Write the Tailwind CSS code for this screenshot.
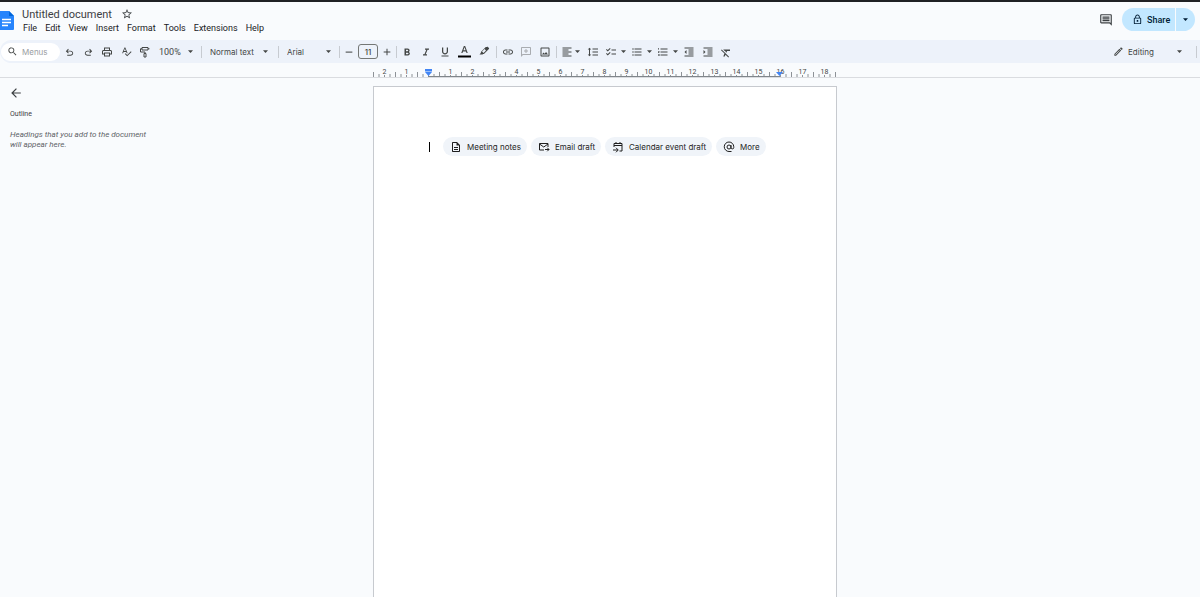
<!DOCTYPE html>
<html lang="en">
<head>
<meta charset="utf-8">
<meta name="viewport" content="width=device-width, initial-scale=1">
<title>Untitled document</title>
<script src="https://cdn.jsdelivr.net/npm/@tailwindcss/browser@4"></script>
</head>
<body class="flex min-h-screen flex-col overflow-hidden bg-[#f9fbfd] font-['Roboto',sans-serif] text-[9px] leading-3 text-[#3c4043]">
<svg class="hidden" aria-hidden="true">
  <symbol id="down" viewBox="0 0 10 10"><path d="M0 2.500h10L5 8z" fill="currentColor"/></symbol>
</svg>

<header class="flex h-10 items-start border-t-2 border-[#202124] pr-[5px]">
  <svg class="mt-2 h-5 w-[14px] shrink-0" viewBox="0 0 14 20" aria-label="Docs"><path d="M0 1h9l5 5v13a1 1 0 0 1-1 1H0z" fill="#2684fc"/><path d="M9 1v5h5z" fill="#0066da"/><path d="M2 9.500h9M2 12.500h9M2 15.500h6" stroke="#fff" stroke-width="1.400"/></svg>
  <div class="ml-2 mt-1.5 flex flex-col">
    <div class="flex h-3 items-center">
      <input aria-label="Document title" value="Untitled document" class="h-4 w-[99px] bg-transparent text-[11px] text-[#3c4043] outline-none">
      <button aria-label="Star"><svg class="size-3" viewBox="0 0 24 24" fill="currentColor"><path d="M22 9.240l-7.190-.62L12 2 9.190 8.630 2 9.240l5.460 4.730L5.820 21 12 17.270 18.180 21l-1.630-7.030L22 9.240zM12 15.400l-3.760 2.270 1-4.280-3.320-2.880 4.380-.38L12 6.100l1.710 4.040 4.380.38-3.320 2.880 1 4.280L12 15.400z"/></svg></button>
    </div>
    <nav class="mt-0.5 flex gap-2 pl-px text-[#202124]">
      <button>File</button><button>Edit</button><button>View</button><button>Insert</button><button>Format</button><button>Tools</button><button>Extensions</button><button>Help</button>
    </nav>
  </div>
  <div class="ml-auto mt-1.5 flex items-center gap-[9px]">
    <button aria-label="Comments"><svg class="size-[14px]" viewBox="0 0 24 24" fill="currentColor"><path d="M21.990 4c0-1.100-.89-2-1.990-2H4c-1.100 0-2 .9-2 2v12c0 1.100.9 2 2 2h14l4 4-.01-18zM20 4v13.170L18.830 16H4V4h16v13.200zM6 12h12v2H6zm0-3h12v2H6zm0-3h12v2H6z"/></svg></button>
    <div class="flex h-[23px] text-[#001d35]">
      <button class="flex w-[53px] items-center gap-1 rounded-l-full bg-[#c2e7ff] pl-2.5 font-medium"><svg class="size-[11px] shrink-0" viewBox="0 0 24 24" fill="currentColor"><path d="M18 8h-1V6c0-2.760-2.240-5-5-5S7 3.240 7 6v2H6c-1.100 0-2 .9-2 2v10c0 1.100.9 2 2 2h12c1.100 0 2-.9 2-2V10c0-1.100-.9-2-2-2zM9 6c0-1.660 1.340-3 3-3s3 1.340 3 3v2H9V6zm9 14H6V10h12v10zm-6-3c1.100 0 2-.9 2-2s-.9-2-2-2-2 .9-2 2 .9 2 2 2z"/></svg>Share</button>
      <button aria-label="Share options" class="ml-px flex w-[19px] items-center justify-center rounded-r-full bg-[#c2e7ff]"><svg class="size-[5px]"><use href="#down"/></svg></button>
    </div>
  </div>
</header>

<div role="toolbar" aria-label="Main toolbar" class="flex h-[23px] shrink-0 items-center rounded-l-full bg-[#edf2fa] pr-[3px] text-[#444746] [&_button]:flex [&_button]:h-4 [&_button]:shrink-0 [&_button]:items-center [&_button]:justify-center [&_svg]:fill-current [&_hr]:h-3 [&_hr]:w-px [&_hr]:shrink-0 [&_hr]:border-0 [&_hr]:bg-[#c7cbd1]">
  <label class="ml-px flex h-[18px] w-[59px] shrink-0 items-center gap-1 rounded-full bg-white pl-1.5"><svg class="size-[11px] shrink-0" viewBox="0 0 24 24"><path d="M15.500 14h-.79l-.28-.27A6.471 6.471 0 0 0 16 9.500 6.500 6.500 0 1 0 9.500 16c1.610 0 3.090-.59 4.230-1.570l.27.28v.79l5 4.990L20.490 19l-4.990-5zm-6 0C7.010 14 5 11.990 5 9.500S7.010 5 9.500 5 14 7.010 14 9.500 11.990 14 9.500 14z"/></svg><input aria-label="Search the menus" placeholder="Menus" class="w-9 bg-transparent font-['Inter',sans-serif] text-[8px] outline-none placeholder:text-[#9a9da1]"></label>
  <button class="w-[19px]" aria-label="Undo"><svg class="mt-0.5 size-[11px]" viewBox="0 0 24 24"><path d="M7 19v-2h7.100q1.575 0 2.737-1T18 13.500 16.837 11 14.100 10H7.800l2.600 2.600L9 14 4 9l5-5 1.400 1.400L7.800 8h6.300q2.425 0 4.163 1.575T20 13.500t-1.737 3.925T14.100 19z"/></svg></button>
  <button class="w-[18px]" aria-label="Redo"><svg class="mt-0.5 size-[11px] -scale-x-100" viewBox="0 0 24 24"><path d="M7 19v-2h7.100q1.575 0 2.737-1T18 13.500 16.837 11 14.100 10H7.800l2.600 2.600L9 14 4 9l5-5 1.400 1.400L7.800 8h6.300q2.425 0 4.163 1.575T20 13.500t-1.737 3.925T14.100 19z"/></svg></button>
  <button class="w-5" aria-label="Print"><svg class="size-3" viewBox="0 0 24 24"><path d="M19 8h-1V3H6v5H5c-1.660 0-3 1.340-3 3v6h4v4h12v-4h4v-6c0-1.660-1.340-3-3-3zM8 5h8v3H8V5zm8 14H8v-4h8v4zm2-4v-2H6v2H4v-4c0-.55.45-1 1-1h14c.55 0 1 .45 1 1v4h-2z"/></svg></button>
  <button class="w-[18px]" aria-label="Spelling"><svg class="size-[11px]" viewBox="0 0 24 24"><path d="M12.450 16h2.090L9.430 3H7.570L2.460 16h2.090l1.120-3h5.640l1.140 3zm-6.020-5L8.500 5.480 10.570 11H6.430zm15.160.59l-8.090 8.090L9.830 16l-1.410 1.410 5.090 5.090L23 13l-1.410-1.410z"/></svg></button>
  <button class="w-5" aria-label="Paint format"><svg class="size-3" viewBox="0 0 24 24" style="fill:none" stroke="currentColor" stroke-width="2"><path d="M6 3h12v5H6zM18 5.500h3M6 5.500H3V12h9v3M10 15h4v7h-4z"/></svg></button>
  <label class="grid w-[46px] shrink-0 items-center"><select aria-label="Zoom" class="col-start-1 row-start-1 w-full appearance-none pl-1 outline-none"><option>100%</option></select><svg class="pointer-events-none col-start-1 row-start-1 mr-2 size-[5px] justify-self-end"><use href="#down"/></svg></label>
  <hr>
  <label class="grid w-[76px] shrink-0 items-center"><select aria-label="Styles" class="col-start-1 row-start-1 w-full appearance-none pl-2 font-['Inter',sans-serif] text-[8px] outline-none"><option>Normal text</option></select><svg class="pointer-events-none col-start-1 row-start-1 mr-2.5 size-[5px] justify-self-end"><use href="#down"/></svg></label>
  <hr>
  <label class="grid w-[60px] shrink-0 items-center"><select aria-label="Font" class="col-start-1 row-start-1 w-full appearance-none pl-2 font-['Inter',sans-serif] text-[8px] outline-none"><option>Arial</option></select><svg class="pointer-events-none col-start-1 row-start-1 mr-2 size-[5px] justify-self-end"><use href="#down"/></svg></label>
  <hr>
  <button class="w-[18px]" aria-label="Decrease font size"><svg class="size-[10px]" viewBox="0 0 24 24"><path d="M4 11h16v2.500H4z"/></svg></button>
  <input aria-label="Font size" value="11" class="h-[15px] w-5 shrink-0 rounded-[3px] border border-[#747775] text-center font-['Inter',sans-serif] text-[8px] font-medium outline-none">
  <button class="w-[18px]" aria-label="Increase font size"><svg class="size-[10px]" viewBox="0 0 24 24"><path d="M20 13.200h-6.800V20h-2.400v-6.800H4v-2.400h6.800V4h2.400v6.800H20z"/></svg></button>
  <hr>
  <button class="w-5" aria-label="Bold"><svg class="size-3" viewBox="0 0 24 24"><path d="M15.600 11.790c.97-.67 1.650-1.770 1.650-2.790 0-2.260-1.750-4-4-4H7v14h7.040c2.090 0 3.710-1.700 3.710-3.790 0-1.520-.86-2.820-2.150-3.420zM10 7.500h3c.83 0 1.500.67 1.500 1.500s-.67 1.500-1.500 1.500h-3v-3zm3.500 9H10v-3h3.500c.83 0 1.500.67 1.500 1.500s-.67 1.500-1.500 1.500z"/></svg></button>
  <button class="w-[18px]" aria-label="Italic"><svg class="size-3" viewBox="0 0 24 24"><path d="M10 5v2.500h2.600L8.900 16.500H6V19h8v-2.500h-2.600L15.100 7.500H18V5z"/></svg></button>
  <button class="w-5" aria-label="Underline"><svg class="size-3" viewBox="0 0 24 24"><path d="M12 17c3.310 0 6-2.690 6-6V3h-2.500v8c0 1.930-1.570 3.500-3.500 3.500S8.500 12.930 8.500 11V3H6v8c0 3.310 2.690 6 6 6zm-7 2v2h14v-2H5z"/></svg></button>
  <button class="w-[19px]" aria-label="Text color"><svg class="size-[13px]" viewBox="0 0 26 26"><path d="M0 21h26v4H0z" fill="#000"/><path d="M11.700 2L6.500 16H9l1.100-3.200h5.800L17 16h2.500L14.300 2zm-.8 8.700L13 4.700l2.100 6z"/></svg></button>
  <button class="w-5" aria-label="Highlight color"><svg class="size-3" viewBox="0 0 24 24"><path d="M15.500 2.200 6.200 11.500c-.6.600-.7 1.500-.2 2.200L3 17h6l1.200-1.200c.7.400 1.500.3 2.100-.3L21.800 6c.6-.6.600-1.500 0-2.100l-1.900-1.800c-.6-.6-1.600-.6-2.200 0zM11 13.800 8.100 11l5-5L16 8.900z"/></svg></button>
  <hr class="ml-0.5">
  <button class="w-[21px]" aria-label="Insert link"><svg class="size-3" viewBox="0 0 24 24"><path d="M3.900 12c0-1.710 1.390-3.100 3.100-3.100h4V7H7c-2.760 0-5 2.240-5 5s2.240 5 5 5h4v-1.900H7c-1.710 0-3.100-1.390-3.100-3.100zM8 13h8v-2H8v2zm9-6h-4v1.900h4c1.710 0 3.100 1.390 3.100 3.100s-1.390 3.100-3.100 3.100h-4V17h4c2.760 0 5-2.240 5-5s-2.240-5-5-5z"/></svg></button>
  <button class="w-4 text-[#a9acb0]" aria-label="Add comment"><svg class="size-3 -scale-x-100" viewBox="0 0 24 24"><path d="M22 4c0-1.100-.9-2-2-2H4c-1.100 0-2 .9-2 2v12c0 1.100.9 2 2 2h14l4 4V4zm-2 13.200L18.800 16H4V4h16v13.200zM13 14h-2v-3H8V9h3V6h2v3h3v2h-3z"/></svg></button>
  <button class="w-[22px]" aria-label="Insert image"><svg class="size-3" viewBox="0 0 24 24"><path d="M19 5v14H5V5h14m0-2H5c-1.100 0-2 .9-2 2v14c0 1.100.9 2 2 2h14c1.100 0 2-.9 2-2V5c0-1.100-.9-2-2-2zm-4.860 8.860l-3 3.870L9 13.140 6 17h12l-3.860-5.140z"/></svg></button>
  <hr>
  <button class="w-[27px] gap-0.5" aria-label="Align"><svg class="size-3 shrink-0" viewBox="0 0 24 24"><path d="M15 15H3v2h12v-2zm0-8H3v2h12V7zM3 13h18v-2H3v2zm0 8h18v-2H3v2zM3 3v2h18V3H3z"/></svg><svg class="size-[5px] shrink-0"><use href="#down"/></svg></button>
  <button class="w-[18px]" aria-label="Line spacing"><svg class="size-3" viewBox="0 0 24 24"><path d="M6 7h2.500L5 3.500 1.500 7H4v10H1.500L5 20.500 8.500 17H6V7zm5-2v2h11V5H11zm0 14h11v-2H11v2zm0-6h11v-2H11v2z"/></svg></button>
  <button class="w-[27px] gap-1" aria-label="Checklist"><svg class="size-3 shrink-0" viewBox="0 0 24 24"><path d="M22 7h-9v2h9V7zm0 8h-9v2h9v-2zM5.540 11L2 7.460l1.410-1.410 2.120 2.120 4.240-4.240 1.410 1.410L5.540 11zm0 8L2 15.460l1.410-1.410 2.120 2.120 4.240-4.240 1.410 1.410L5.540 19z"/></svg><svg class="size-[5px] shrink-0"><use href="#down"/></svg></button>
  <button class="w-[25px] gap-1" aria-label="Bulleted list"><svg class="size-3 shrink-0" viewBox="0 0 24 24"><path d="M4 10.500c-.83 0-1.500.67-1.500 1.500s.67 1.500 1.500 1.500 1.500-.67 1.500-1.500-.67-1.500-1.500-1.500zm0-6c-.83 0-1.500.67-1.500 1.500S3.170 7.500 4 7.500 5.500 6.830 5.500 6 4.830 4.500 4 4.500zm0 12c-.83 0-1.500.68-1.500 1.500s.68 1.500 1.500 1.500 1.500-.68 1.500-1.500-.67-1.500-1.500-1.500zM7 19h14v-2H7v2zm0-6h14v-2H7v2zm0-8v2h14V5H7z"/></svg><svg class="size-[5px] shrink-0"><use href="#down"/></svg></button>
  <button class="w-[27px] gap-1" aria-label="Numbered list"><svg class="size-3 shrink-0" viewBox="0 0 24 24"><path d="M2 17h2v.5H3v1h1v.5H2v1h3v-4H2v1zm1-9h1V4H2v1h1v3zm-1 3h1.800L2 13.100v.9h3v-1H3.200L5 10.900V10H2v1zm5-6v2h14V5H7zm0 14h14v-2H7v2zm0-6h14v-2H7v2z"/></svg><svg class="size-[5px] shrink-0"><use href="#down"/></svg></button>
  <button class="w-4" aria-label="Decrease indent"><svg class="size-3" viewBox="0 0 24 24"><path d="M11 17h10v-2H11v2zm-8-5l4 4V8l-4 4zm0 9h18v-2H3v2zM3 3v2h18V3H3zm8 6h10V7H11v2zm0 4h10v-2H11v2z"/></svg></button>
  <button class="w-[21px]" aria-label="Increase indent"><svg class="size-3" viewBox="0 0 24 24"><path d="M3 21h18v-2H3v2zM3 8v8l4-4-4-4zm8 9h10v-2H11v2zM3 3v2h18V3H3zm8 6h10V7H11v2zm0 4h10v-2H11v2z"/></svg></button>
  <button class="w-4" aria-label="Clear formatting"><svg class="mt-0.5 size-3" viewBox="0 0 24 24"><path d="M20 8V5H6.390l3 3h1.830l-.55 1.280 2.090 2.100L14.210 8zM3.410 4.860L2 6.270l6.970 6.970L6.500 19h3l1.570-3.660L16.730 21l1.410-1.410z"/></svg></button>
  <label class="ml-auto flex shrink-0 items-center gap-1"><svg class="size-[11px]" viewBox="0 0 24 24"><path d="M14.060 9.020l.92.92L5.920 19H5v-.92l9.060-9.060M17.660 3c-.25 0-.51.1-.7.290l-1.830 1.830 3.750 3.750 1.830-1.830a.996.996 0 0 0 0-1.410l-2.340-2.340c-.2-.2-.45-.29-.71-.29zm-3.600 3.190L3 17.250V21h3.750L17.810 9.940l-3.750-3.750z"/></svg>
    <span class="grid w-[68px] items-center"><select aria-label="Editing mode" class="col-start-1 row-start-1 w-full appearance-none font-['Inter',sans-serif] text-[8px] outline-none"><option>Editing</option></select><svg class="pointer-events-none col-start-1 row-start-1 mr-[14px] size-[5px] justify-self-end"><use href="#down"/></svg></span></label>
  <hr>
</div>

<div class="flex h-[15px] shrink-0 justify-center border-b border-[#dadce0] pl-[9px]">
  <svg id="ruler" class="h-[15px] w-[465px] overflow-visible" viewBox="372 63 465 15" role="img" aria-label="Ruler"></svg>
</div>

<div class="grid grow grid-cols-[1fr_464px_1fr]">
  <aside class="pl-[10px] pt-[9px]">
    <button aria-label="Close outline" class="block"><svg class="size-3" viewBox="2 2 20 20" fill="currentColor"><path d="M20 11H7.830l5.590-5.590L12 4l-8 8 8 8 1.410-1.410L7.830 13H20v-2z"/></svg></button>
    <h2 class="mt-[9px] text-[7px] leading-3">Outline</h2>
    <p class="mt-[10px] w-36 text-[8px] italic leading-[10px] text-[#5f6368]">Headings that you add to the document will appear here.</p>
  </aside>
  <main class="ml-[5px] mr-[-5px] mt-2 border border-b-0 border-[#c7cacf] bg-white pl-[55px] pt-[50px]">
    <div class="flex h-[19px] items-center whitespace-nowrap font-['Inter',sans-serif] text-[8px] text-[#1f1f1f] [&_button]:flex [&_button]:h-[19px] [&_button]:shrink-0 [&_button]:items-center [&_button]:gap-[5px] [&_button]:rounded-full [&_button]:bg-[#f0f4f9] [&_button]:pl-[7px]">
      <span class="mr-[13px] h-[10px] w-px bg-black"></span>
      <div class="flex gap-1">
      <button class="w-[84px]"><svg class="size-3 shrink-0" viewBox="0 0 24 24" fill="currentColor"><path d="M8 16h8v2H8zm0-4h8v2H8zm6-10H6c-1.100 0-2 .9-2 2v16c0 1.100.89 2 1.990 2H18c1.100 0 2-.9 2-2V8l-6-6zm4 18H6V4h7v5h5v11z"/></svg>Meeting notes</button>
      <button class="w-[70px]"><svg class="size-3 shrink-0" viewBox="0 0 24 24" fill="none" stroke="currentColor" stroke-width="2"><path d="M12 18H3V5h17v7M3 6l8.500 6L20 6M14 17h8M18.500 13.500 22 17l-3.500 3.500"/></svg>Email draft</button>
      <button class="w-[107px]"><svg class="size-3 shrink-0" viewBox="0 0 24 24" fill="none" stroke="currentColor" stroke-width="2"><path d="M4 12V5h16v15h-5M4 9h16M8 2v4M16 2v4M2 18h10M8 13.500l4.500 4.500L8 22.500"/></svg>Calendar event draft</button>
      <button class="w-[50px]"><svg class="size-3 shrink-0" viewBox="0 0 24 24" fill="none" stroke="currentColor" stroke-width="2"><circle cx="12" cy="12" r="4"/><path d="M17 21H12a9.500 9.500 0 1 1 9.500-9.500v1.500a2.700 2.700 0 0 1-5.500 0V8"/></svg>More</button>
      </div>
    </div>
  </main>
</div>
<script>
  // Ruler in centimetres: zero at x=428.5, one unit is 22 pixels, a tick every quarter unit.
  const unit = 22, zero = 428.5;
  let out = '<path d="M428 76.500H780" stroke="#80868b"/>';
  for (let q = -10; q <= 74; q++) {
    const x = zero + q * unit / 4;
    const top = q % 4 === 0 ? 75 : q % 2 === 0 ? 72 : 74;
    out += `<path d="M${x} ${top}V77" stroke="#80868b" stroke-width="0.900"/>`;
    if (q % 4 === 0 && q !== 0) out += `<text x="${x}" y="74" text-anchor="middle" font-size="7" fill="#444746">${Math.abs(q / 4)}</text>`;
  }
  out += '<path d="M425 69h7v2.500h-7zM425 72h7l-3.500 4z" fill="#4285f4"/><path d="M776 72h7l-3.500 4z" fill="#4285f4"/>';
  document.getElementById('ruler').innerHTML = out;
</script>
</body>
</html>
